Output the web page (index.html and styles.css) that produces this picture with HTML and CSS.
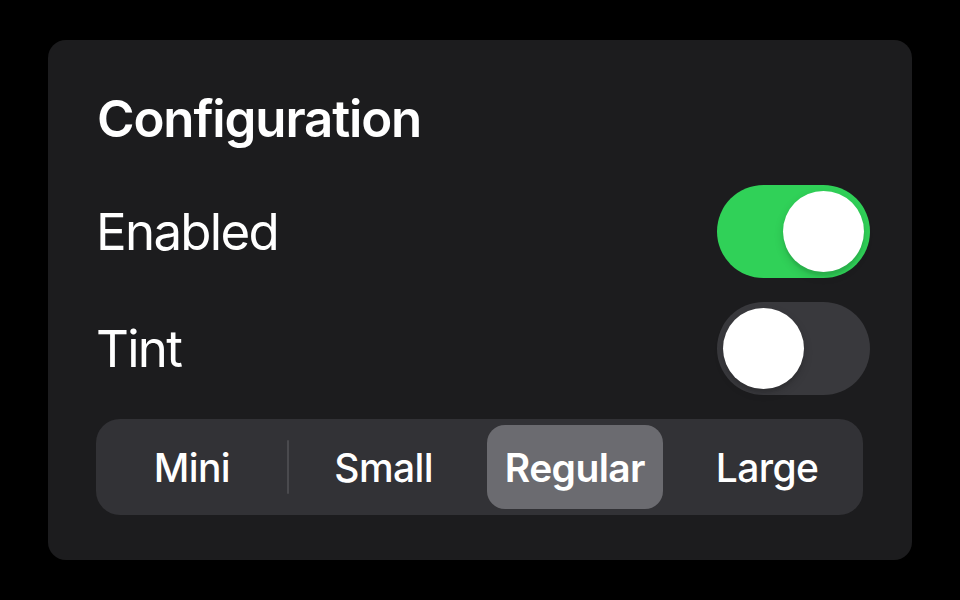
FILE: index.html
```html
<!DOCTYPE html>
<html lang="en">
<head>
<meta charset="utf-8">
<title>Configuration</title>
<link rel="stylesheet" href="styles.css">
</head>
<body>
<div class="card">
  <h1 class="title">Configuration</h1>
  <div class="rows">
    <div class="row">
      <span class="label">Enabled</span>
      <div class="toggle on"><span class="knob"></span></div>
    </div>
    <div class="row">
      <span class="label">Tint</span>
      <div class="toggle"><span class="knob"></span></div>
    </div>
    <div class="segmented">
      <div class="seg">Mini</div>
      <div class="seg divider">Small</div>
      <div class="seg selected">Regular</div>
      <div class="seg">Large</div>
    </div>
  </div>
</div>
</body>
</html>
```
FILE: styles.css
```css
html, body {
  margin: 0;
  padding: 0;
  background: #000;
  width: 960px;
  height: 600px;
  overflow: hidden;
}
body {
  font-family: Inter, "Liberation Sans", sans-serif;
  color: #fff;
  padding-top: 40px;
  box-sizing: border-box;
}
.card {
  margin: 0 48px;
  height: 520px;
  box-sizing: border-box;
  background: #1c1c1e;
  border-radius: 18px;
  padding: 48px 42px 0 48px;
}
.title {
  margin: 0 0 36px 0;
  font-size: 51px;
  line-height: 61px;
  font-weight: 600;
  letter-spacing: -1.15px;
  padding-left: 1px;
}
.rows {
  display: flex;
  flex-direction: column;
  gap: 24px;
}
.row {
  display: flex;
  align-items: center;
  justify-content: space-between;
  height: 93px;
}
.label {
  font-size: 51px;
  line-height: 61px;
  font-weight: 400;
  letter-spacing: -1.7px;
  padding-left: 0;
}
.toggle {
  width: 153px;
  height: 93px;
  border-radius: 47px;
  background: #39393d;
  display: flex;
  align-items: center;
  padding: 0 6px;
  box-sizing: border-box;
}
.toggle.on {
  background: #30d158;
  justify-content: flex-end;
}
.knob {
  width: 81px;
  height: 81px;
  border-radius: 50%;
  background: #fff;
  box-shadow: 0 4px 10px rgba(0, 0, 0, 0.15), 0 4px 2px rgba(0, 0, 0, 0.06);
}
.segmented {
  margin-right: 7px;
  height: 96px;
  border-radius: 24px;
  background: #323236;
  display: grid;
  grid-template-columns: repeat(4, 1fr);
  align-items: stretch;
  padding: 6px 0;
  box-sizing: border-box;
}
.seg {
  position: relative;
  display: flex;
  align-items: center;
  justify-content: center;
  font-size: 39px;
  font-weight: 460;
  letter-spacing: -0.6px;
  border-radius: 18px;
}
.seg.divider::before {
  content: "";
  position: absolute;
  left: -1px;
  top: 15px;
  bottom: 15px;
  width: 2px;
  border-radius: 1px;
  background: #4a4a4e;
}
.seg.selected {
  background: #6b6b70;
  font-weight: 590;
  margin: 0 8px 0 7px;
}
```
